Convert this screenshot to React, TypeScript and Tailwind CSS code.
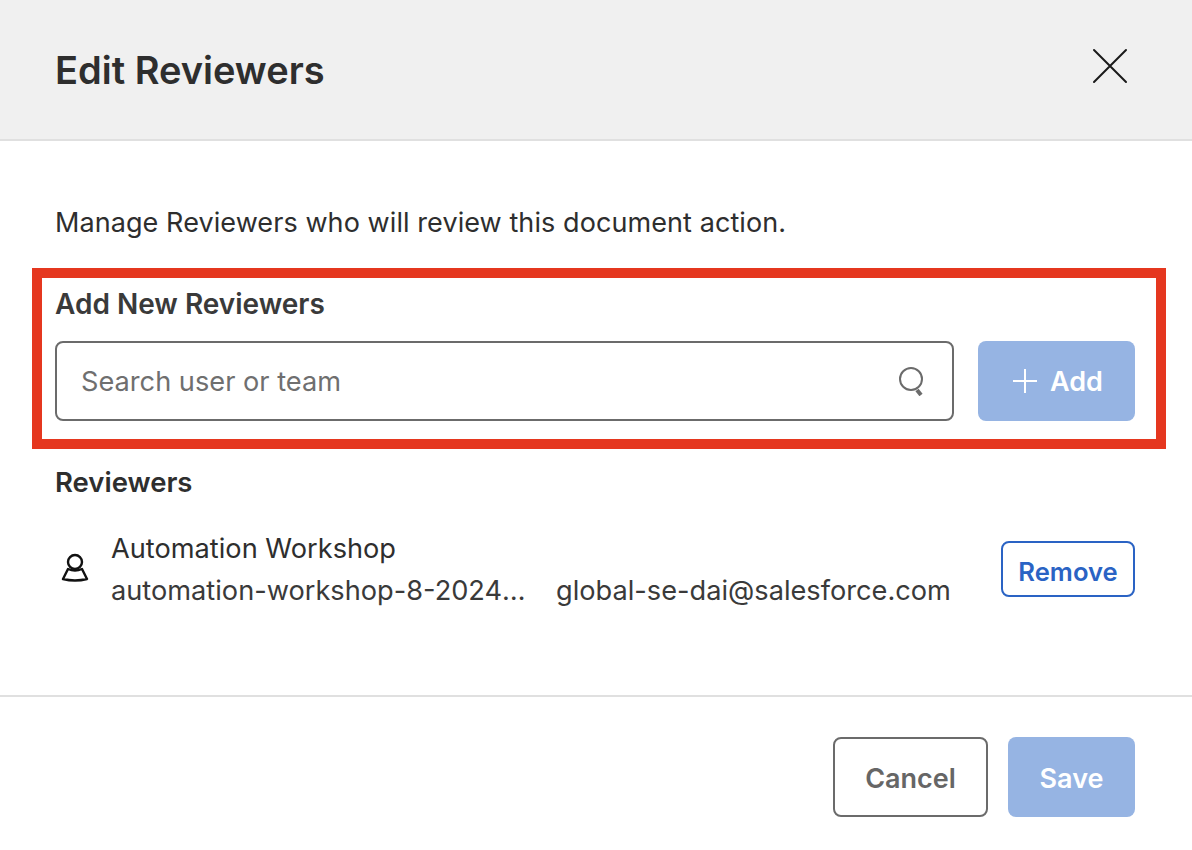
export default function App() {
  const font = { fontFamily: "Inter, sans-serif" };
  return (
    <div style={font} className="w-[1192px] h-[850px] bg-white flex flex-col overflow-hidden text-[#2e2e2e]">
      <header className="h-[141px] shrink-0 bg-[#f0f0f0] border-b-2 border-[#e0e0e0] flex items-center justify-between pl-[55px] pr-[64px]">
        <h1 className="text-[38px] leading-[44px] font-semibold text-[#2e2e2e]">Edit Reviewers</h1>
        <svg className="mb-[8px]" width="36" height="36" viewBox="0 0 36 36" fill="none" stroke="#1a1a1a" strokeWidth="2" strokeLinecap="round">
          <path d="M2 2 L34 34 M34 2 L2 34" />
        </svg>
      </header>

      <main className="flex-1 flex flex-col min-h-0">
        <p className="ml-[55px] mt-[65px] text-[27px] leading-[34px] tracking-[0.08px] text-[#2e2e2e]">Manage Reviewers who will review this document action.</p>

        <section className="mt-[28px] ml-[32px] mr-[26px] h-[181px] border-[10px] border-[#e5371f] pl-[13px] pr-[21px] pt-[10px]">
          <h2 className="text-[28px] leading-[32px] font-semibold text-[#3a3a3a]">Add New Reviewers</h2>
          <div className="mt-[21px] flex gap-[24px]">
            <div className="flex-1 h-[80px] rounded-[8px] border-2 border-[#6b6b6b] flex items-center justify-between pl-[24px] pr-[26px]">
              <span className="text-[27.2px] pt-[2px] text-[#6f6f6f]">Search user or team</span>
              <svg width="28" height="30" viewBox="0 0 28 30" fill="none" stroke="#6b6b6b">
                <circle cx="13" cy="13" r="11" strokeWidth="2" />
                <path d="M19 24 L23 29" strokeWidth="4" />
              </svg>
            </div>
            <button className="w-[157px] h-[80px] pl-[2px] rounded-[8px] bg-[#96b4e3] flex items-center justify-center gap-[12px] text-white text-[27px] font-semibold">
              <svg width="26" height="26" viewBox="0 0 26 26" stroke="#ffffff" strokeWidth="2">
                <path d="M13 1 V25 M1 13 H25" />
              </svg>
              <span className="pt-[2px]">Add</span>
            </button>
          </div>
        </section>

        <h2 className="ml-[55px] mt-[17px] text-[27.5px] leading-[32px] font-semibold text-[#2e2e2e]">Reviewers</h2>

        <div className="mt-[28px] ml-[55px] mr-[57px] flex items-center">
          <svg className="ml-[5px] mt-[-2px] shrink-0" width="30" height="30" viewBox="0 0 30 30" fill="none" stroke="#111111" strokeWidth="2.4" strokeLinejoin="round">
            <circle cx="15" cy="9" r="7" />
            <path d="M8 16 Q15 19 22 16 L27 26 Q15 29 3 26 Z" />
          </svg>
          <div className="ml-[21px] flex-1 min-w-0 pt-[2px]">
            <div className="text-[27.2px] leading-[42px] text-[#2e2e2e]">Automation Workshop</div>
            <div className="text-[27.2px] leading-[42px] text-[#3a3a3a] flex">
              <span className="w-[420px] mr-[25px] truncate">automation-workshop-8-2024-06-12</span>
              <span>global-se-dai@salesforce.com</span>
            </div>
          </div>
          <button className="w-[134px] h-[56px] mb-[1px] pt-[8px] rounded-[8px] border-2 border-[#2a63c4] text-[#2a63c4] text-[25.6px] font-semibold shrink-0">Remove</button>
        </div>

        <div className="mt-auto h-[155px] shrink-0 border-t-2 border-[#e0e0e0] flex items-start justify-end gap-[20px] pt-[40px] pr-[57px]">
          <button className="w-[155px] h-[80px] pt-[4px] rounded-[8px] border-2 border-[#6b6b6b] text-[#666666] text-[27px] font-semibold">Cancel</button>
          <button className="w-[127px] h-[80px] pt-[4px] rounded-[8px] bg-[#96b4e3] text-white text-[27px] font-semibold">Save</button>
        </div>
      </main>
    </div>
  );
}
